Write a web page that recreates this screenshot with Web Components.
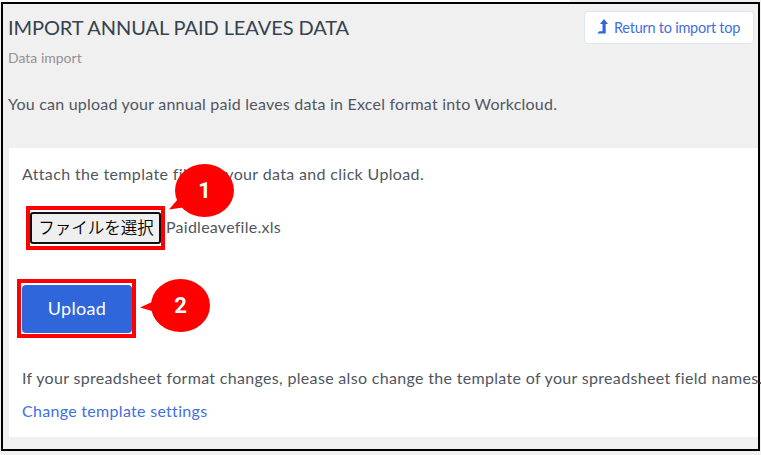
<!DOCTYPE html>
<html lang="en">
<head>
<meta charset="utf-8">
<title>Import annual paid leaves data</title>
<style>
html {
    background: linear-gradient(to right, #fff 570px, #f0f0f0 570px) 0 0 / 100% 2px no-repeat #f1f1f1;
}
body {
    margin: 0;
    font-family: Lato, "Noto Sans CJK JP", sans-serif;
}
</style>
</head>
<body>
<import-page></import-page>

<script>
class ReturnLink extends HTMLElement {

    static template = document.createElement('template');

    constructor() {
        super();
        this.attachShadow({ mode: 'open' });
        this.shadowRoot.append(ReturnLink.template.content.cloneNode(true));
    }

}

ReturnLink.template.innerHTML = `
<style>
:host {
    display: flex;
    box-sizing: border-box;
    width: 170px;
    height: 33px;
    padding: 0 12px 0 12px;
    border: 1px solid #dbe4f8;
    border-radius: 4px;
    background: #fff;
    color: #3f70de;
    font-size: 14.5px;
    line-height: 32px;
    letter-spacing: -0.25px;
    white-space: nowrap;
}
svg {
    flex: none;
    width: 11px;
    height: 15px;
    margin: 7px 6px 0 0;
}
</style>
<svg viewBox="0 0 11 15"><path d="M7 0 L11 5 H8.7 V14.5 H0.3 L2.3 12.3 H5.5 V5 H3 Z" fill="#2e66dc"/></svg>
<span><slot></slot></span>
`;

customElements.define('return-link', ReturnLink);

class StepMark extends HTMLElement {

    static template = document.createElement('template');

    constructor() {
        super();
        this.attachShadow({ mode: 'open' });
        this.shadowRoot.append(StepMark.template.content.cloneNode(true));
    }

    connectedCallback() {
        this.shadowRoot.querySelector('.number').textContent = this.getAttribute('step');
        this.shadowRoot.querySelector('path').setAttribute('d', this.getAttribute('tail'));
    }

}

// The balloon hangs over the page, outside the red outline
StepMark.template.innerHTML = `
<style>
:host {
    display: block;
    position: relative;
    box-sizing: border-box;
    border: 4px solid #f00;
}
.balloon {
    position: absolute;
    left: var(--balloon-x);
    top: var(--balloon-y);
    width: 59px;
    height: 53px;
    z-index: 1;
}
svg {
    position: absolute;
    inset: 0;
    overflow: visible;
}
.number {
    position: relative;
    display: block;
    color: #fff;
    font: bold 22px/53px Roboto, sans-serif;
    text-align: center;
}
</style>
<slot></slot>
<div class="balloon">
<svg width="59" height="53"><g fill="#f00"><ellipse cx="29.5" cy="26.5" rx="29.5" ry="26.5"/><path/></g></svg>
<span class="number"></span>
</div>
`;

customElements.define('step-mark', StepMark);

class FileField extends HTMLElement {

    static template = document.createElement('template');

    constructor() {
        super();
        this.attachShadow({ mode: 'open' });
        this.shadowRoot.append(FileField.template.content.cloneNode(true));
    }

}

FileField.template.innerHTML = `
<style>
:host {
    display: flex;
    align-items: center;
    height: 44px;
    margin-left: 4px;
}
step-mark {
    width: 139px;
    height: 44px;
    padding: 2px 0 0 0;
    --balloon-x: 145px;
    --balloon-y: -46px;
}
button {
    display: block;
    box-sizing: border-box;
    width: 131px;
    height: 32px;
    padding: 0 0 3px 1px;
    border: 2px solid #101010;
    border-radius: 3px;
    background: #efefef;
    color: #000;
    font: 350 16.5px/24px "Noto Sans CJK JP", sans-serif;
    white-space: nowrap;
}
.name {
    margin: -3px 0 0 1px;
    letter-spacing: 0.25px;
}
</style>
<step-mark step="1" tail="M3 35 L-6 45.5 L8 43.5 L16 40 Z"><button>ファイルを選択</button></step-mark>
<span class="name"><slot></slot></span>
`;

customElements.define('file-field', FileField);

class UploadButton extends HTMLElement {

    static template = document.createElement('template');

    constructor() {
        super();
        this.attachShadow({ mode: 'open' });
        this.shadowRoot.append(UploadButton.template.content.cloneNode(true));
    }

}

UploadButton.template.innerHTML = `
<style>
:host {
    display: block;
    margin-left: -5px;
}
step-mark {
    width: 119px;
    height: 59px;
    padding: 2px 0 0 1px;
    --balloon-x: 130px;
    --balloon-y: -4px;
}
button {
    display: block;
    width: 110px;
    height: 48px;
    padding: 0 0 2px;
    border: 0;
    border-radius: 4px;
    background: #2f66da;
    color: #fff;
    font: 18px/44px Lato, sans-serif;
    letter-spacing: 0.3px;
}
</style>
<step-mark step="2" tail="M1 23 L-11 28.5 L1 32 L6 28 Z"><button><slot></slot></button></step-mark>
`;

customElements.define('upload-button', UploadButton);

class ImportPage extends HTMLElement {

    static template = document.createElement('template');

    constructor() {
        super();
        this.attachShadow({ mode: 'open' });
        this.shadowRoot.append(ImportPage.template.content.cloneNode(true));
    }

}

ImportPage.template.innerHTML = `
<style>
:host {
    display: block;
    box-sizing: border-box;
    width: 759px;
    height: 449px;
    margin: 2px 0 0 1px;
    border: 2px solid #000;
    background: #f0f0f0;
    color: #50565f;
    font-size: 16px;
    line-height: 22px;
    white-space: nowrap;
}
header {
    display: flex;
    justify-content: space-between;
    height: 82px;
    padding: 7px 4px 0 5px;
}
h1 {
    margin: 4px 0 0;
    color: #36424f;
    font-size: 20px;
    font-weight: 400;
    line-height: 24px;
    letter-spacing: -0.08px;
}
.sub {
    margin: 9px 0 0;
    color: #929292;
    font-size: 14px;
    line-height: 20px;
}
p {
    margin: 0;
}
.intro {
    padding-left: 5px;
    letter-spacing: 0.22px;
}
main {
    height: 274px;
    margin: 33px 0 0 6px;
    padding: 15px 0 0 13px;
    background: #fff;
}
.attach {
    letter-spacing: 0.35px;
}
file-field {
    margin-top: 21px;
}
upload-button {
    margin-top: 29px;
}
.note {
    margin-top: 29px;
    letter-spacing: 0.32px;
}
a {
    display: block;
    margin-top: 11px;
    color: #3f70de;
    letter-spacing: 0.3px;
    text-decoration: none;
}
</style>
<header>
<div>
<h1>IMPORT ANNUAL PAID LEAVES DATA</h1>
<p class="sub">Data import</p>
</div>
<return-link>Return to import top</return-link>
</header>
<p class="intro">You can upload your annual paid leaves data in Excel format into Workcloud.</p>
<main>
<p class="attach">Attach the template file for your data and click Upload.</p>
<file-field>Paidleavefile.xls</file-field>
<upload-button>Upload</upload-button>
<p class="note">If your spreadsheet format changes, please also change the template of your spreadsheet field names.</p>
<a href="#">Change template settings</a>
</main>
`;

customElements.define('import-page', ImportPage);
</script>
</body>
</html>
